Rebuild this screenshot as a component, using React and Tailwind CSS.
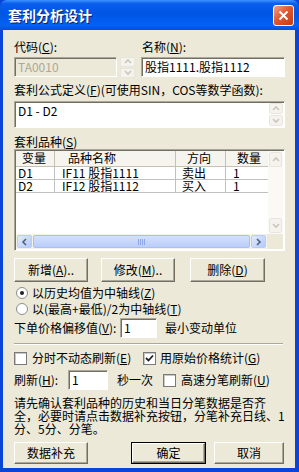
import React from "react";

const font = "font-['Noto_Sans_CJK_SC',sans-serif]";
const sunken =
  "border border-t-[#ACA899] border-l-[#ACA899] border-b-white border-r-white shadow-[inset_1px_1px_0_#716F64]";
const raised =
  "border border-t-white border-l-white border-r-[#716F64] border-b-[#716F64] shadow-[inset_-1px_-1px_0_#ACA899] bg-[#ECE9D8]";

const U = ({ children }) => <span className="underline">{children}</span>;

function Chevron({ dir = "up", color = "#4D6185" }) {
  const d = {
    up: "M1 5 L4 2 L7 5",
    down: "M1 2 L4 5 L7 2",
    left: "M5 1 L2 4 L5 7",
    right: "M2 1 L5 4 L2 7",
  }[dir];
  return (
    <svg width="8" height="8" viewBox="0 0 8 8">
      <path d={d} fill="none" stroke={color} strokeWidth="1.6" />
    </svg>
  );
}

function ScrollBtn({ dir, enabled, className = "" }) {
  return enabled ? (
    <div className={`flex items-center justify-center rounded-[2px] border border-[#B6CCF9] bg-[linear-gradient(135deg,#E1EAFE,#B5CAF7)] ${className}`}>
      <Chevron dir={dir} />
    </div>
  ) : (
    <div className={`flex items-center justify-center rounded-[2px] border border-[#E8E6DC] bg-[#F4F3EE] ${className}`}>
      <Chevron dir={dir} color="#C9C7BA" />
    </div>
  );
}

function Btn({ children, className = "" }) {
  return (
    <div className={`flex items-center justify-center text-[12px] ${raised} ${className}`}>{children}</div>
  );
}

function Check({ checked }) {
  return (
    <div className="flex h-[13px] w-[13px] items-center justify-center border border-[#7A7A7A] bg-white shadow-[inset_1px_1px_0_#C8C8C8]">
      {checked && (
        <svg width="9" height="9" viewBox="0 0 9 9">
          <path d="M1 4 L3.5 6.5 L8 1.5" fill="none" stroke="#202020" strokeWidth="1.8" />
        </svg>
      )}
    </div>
  );
}

function Radio({ checked }) {
  return (
    <div className="flex h-[12px] w-[12px] items-center justify-center rounded-full border border-[#8E8E8E] bg-white">
      {checked && <div className="h-[4px] w-[4px] rounded-full bg-[#202020]" />}
    </div>
  );
}

const rows = [
  ["D1", "IF11 股指1111", "卖出", "1"],
  ["D2", "IF12 股指1112", "买入", "1"],
];

export default function App() {
  return (
    <div className={`flex h-[472px] w-[299px] flex-col bg-[#0B45D8] text-[12px] leading-[14px] text-black ${font}`}>
      {/* Title bar */}
      <div className="flex h-[30px] shrink-0 items-center justify-between rounded-t-[7px] bg-[linear-gradient(180deg,#3D95FF_0%,#0A5EEC_12%,#0055E5_45%,#0262F5_85%,#004FDC_100%)] pl-[8px] pr-[5px]">
        <span className="text-[14px] font-bold text-white [text-shadow:1px_1px_0_#0A1F6E]">套利分析设计</span>
        <div className="flex h-[21px] w-[21px] items-center justify-center rounded-[3px] border border-white bg-[linear-gradient(135deg,#F0A48A,#E1572F_45%,#C33A14)]">
          <svg width="11" height="11" viewBox="0 0 11 11">
            <path d="M1.5 1.5 L9.5 9.5 M9.5 1.5 L1.5 9.5" stroke="white" strokeWidth="2" />
          </svg>
        </div>
      </div>

      {/* Body */}
      <div className="mb-[4px] ml-[3px] mr-[4px] flex flex-1 flex-col bg-[#ECE9D8] pl-[11px] pr-[9px]">
        <div className="mt-[10px] flex">
          <span className="w-[128px]">代码(<U>C</U>):</span>
          <span>名称(<U>N</U>):</span>
        </div>
        <div className="mt-[3px] flex h-[20px]">
          <div className={`flex w-[103px] items-center bg-[#ECE9D8] pl-[3px] text-[#ACA899] ${sunken}`}>TA0010</div>
          <div className="ml-[3px] flex w-[15px] flex-col gap-[1px]">
            <ScrollBtn dir="up" className="flex-1" />
            <ScrollBtn dir="down" className="flex-1" />
          </div>
          <div className={`ml-[6px] flex w-[144px] items-center bg-white pl-[3px] ${sunken}`}>股指1111.股指1112</div>
        </div>

        <div className="mt-[6px]">套利公式定义(<U>F</U>)(可使用SIN，COS等数学函数):</div>
        <div className={`mt-[4px] flex h-[27px] w-[271px] bg-white ${sunken}`}>
          <div className="flex-1 pl-[3px] pt-[2px]">D1 - D2</div>
          <div className="flex w-[15px] flex-col gap-[1px] py-[1px] pr-[1px]">
            <ScrollBtn dir="up" className="flex-1" />
            <ScrollBtn dir="down" className="flex-1" />
          </div>
        </div>

        <div className="mt-[7px]">套利品种(<U>S</U>)</div>
        <div className={`flex h-[102px] w-[271px] flex-col bg-white ${sunken} p-[1px]`}>
          <div className="flex flex-1">
            <div className="flex w-[252px] flex-col">
              <div className="flex h-[16px] border-b border-[#C5C2B2] bg-[#F5F4EF]">
                <div className="w-[39px] border-r border-[#C5C2B2] pl-[6px]">变量</div>
                <div className="w-[121px] border-r border-[#C5C2B2] pl-[13px]">品种名称</div>
                <div className="w-[50px] border-r border-[#C5C2B2] pl-[11px]">方向</div>
                <div className="w-[42px] pl-[11px]">数量</div>
              </div>
              {rows.map((r) => (
                <div key={r[0]} className="flex h-[13px] border-b border-[#C0C0C0] leading-[12px]">
                  <div className="w-[39px] border-r border-[#C0C0C0] pl-[2px]">{r[0]}</div>
                  <div className="w-[121px] border-r border-[#C0C0C0] pl-[7px]">{r[1]}</div>
                  <div className="w-[50px] border-r border-[#C0C0C0] pl-[6px]">{r[2]}</div>
                  <div className="w-[42px] pl-[7px]">{r[3]}</div>
                </div>
              ))}
            </div>
            <div className="flex w-[16px] flex-col justify-between bg-[#FAF9F5] p-[1px]">
              <ScrollBtn dir="up" className="h-[15px]" />
              <ScrollBtn dir="down" className="h-[15px]" />
            </div>
          </div>
          <div className="flex h-[15px]">
            <div className="flex w-[252px] gap-[1px] bg-[#F3F1EA] p-[1px]">
              <ScrollBtn dir="left" enabled className="w-[15px]" />
              <div className="flex flex-1 items-center justify-center rounded-[2px] border border-[#A8BEF5] bg-[linear-gradient(180deg,#D4E0FD,#BACDF9)]">
                <div className="flex gap-[1px]">
                  <div className="h-[6px] w-[1px] bg-[#8CA6E8]" />
                  <div className="h-[6px] w-[1px] bg-[#8CA6E8]" />
                  <div className="h-[6px] w-[1px] bg-[#8CA6E8]" />
                  <div className="h-[6px] w-[1px] bg-[#8CA6E8]" />
                </div>
              </div>
              <ScrollBtn dir="right" enabled className="w-[15px]" />
            </div>
            <div className="w-[16px] bg-[#ECE9D8]" />
          </div>
        </div>

        <div className="mt-[7px] flex h-[24px]">
          <Btn className="w-[74px]">新增(<U>A</U>)..</Btn>
          <Btn className="ml-[13px] w-[74px]">修改(<U>M</U>)..</Btn>
          <Btn className="ml-[15px] w-[75px]">删除(<U>D</U>)</Btn>
        </div>

        <div className="mt-[4px] flex h-[14px] items-center">
          <div className="ml-[2px] w-[16px]"><Radio checked /></div>
          <span>以历史均值为中轴线(<U>Z</U>)</span>
        </div>
        <div className="mt-[2px] flex h-[14px] items-center">
          <div className="ml-[2px] w-[16px]"><Radio /></div>
          <span>以(最高+最低)/2为中轴线(<U>T</U>)</span>
        </div>

        <div className="mt-[2px] flex h-[20px] items-center">
          <span className="w-[106px]">下单价格偏移值(<U>V</U>):</span>
          <div className={`flex h-[20px] w-[37px] items-center bg-white pl-[3px] ${sunken}`}>1</div>
          <span className="ml-[8px]">最小变动单位</span>
        </div>

        <div className="mt-[5px] h-[2px] w-[269px] border-t border-b border-t-[#ACA899] border-b-white" />

        <div className="mt-[6px] flex h-[14px] items-center">
          <Check />
          <span className="ml-[5px] w-[111px]">分时不动态刷新(<U>E</U>)</span>
          <Check checked />
          <span className="ml-[4px]">用原始价格统计(<U>G</U>)</span>
        </div>

        <div className="mt-[5px] flex h-[20px] items-center">
          <span className="w-[54px]">刷新(<U>H</U>):</span>
          <div className={`flex h-[20px] w-[40px] items-center bg-white pl-[3px] ${sunken}`}>1</div>
          <span className="ml-[9px] w-[46px]">秒一次</span>
          <Check />
          <span className="ml-[5px]">高速分笔刷新(<U>U</U>)</span>
        </div>

        <div className="mt-[6px] leading-[13px]">
          请先确认套利品种的历史和当日分笔数据是否齐
          <br />
          全，必要时请点击数据补充按钮，分笔补充日线、1
          <br />
          分、5分、分笔。
        </div>

        <div className="mt-[7px] flex h-[22px]">
          <Btn className="w-[74px]">数据补充</Btn>
          <div className="ml-[43px] flex w-[75px] border border-black">
            <Btn className="flex-1">确定</Btn>
          </div>
          <Btn className="ml-[8px] w-[70px]">取消</Btn>
        </div>
      </div>
    </div>
  );
}
